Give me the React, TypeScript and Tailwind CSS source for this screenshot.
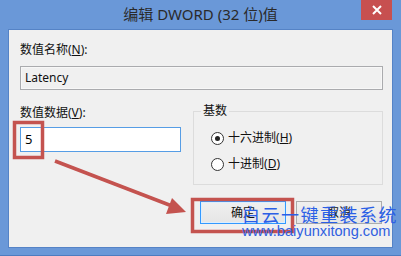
import React from "react";

const font = "font-['Noto_Sans','Noto_Sans_CJK_SC',sans-serif]";

function Radio({ checked, label, accel }: { checked: boolean; label: string; accel: string }) {
  return (
    <div className="flex items-center h-[16px]">
      <div className="w-[13px] h-[13px] rounded-full border border-[#333] bg-white flex items-center justify-center">
        {checked && <div className="w-[5px] h-[5px] rounded-full bg-[#222]" />}
      </div>
      <span className="ml-[4px] text-[12px] leading-[16px] text-[#111]">
        {label}(<u>{accel}</u>)
      </span>
    </div>
  );
}

export default function App() {
  return (
    <div className={`relative w-[401px] h-[256px] bg-[#6a98d8] flex flex-col border-b border-[#4d7cc0] ${font}`}>
      {/* title bar */}
      <div className="h-[29px] flex items-start shrink-0">
        <div className="w-[40px]" />
        <div className="flex-1 text-center text-[15px] leading-[28px] text-[#2a2a2a]">编辑 DWORD (32 位)值</div>
        <div className="w-[31px] h-[20px] mr-[9px] bg-[#c75050] flex items-center justify-center">
          <svg width="10" height="10" viewBox="0 0 10 10">
            <path d="M1 1 L9 9 M9 1 L1 9" stroke="#fff" strokeWidth="2" />
          </svg>
        </div>
      </div>
      {/* client area */}
      <div className="mx-[8px] h-[219px] bg-[#f0f0f0] border border-[#5583c6] pl-[11px] pr-[8px] pt-[12px] text-[#111]">
        <div className="text-[12px] leading-[16px]">
          数值名称(<u>N</u>):
        </div>
        <div className="mt-[8px] mr-[1px] h-[24px] border border-[#aaabae] bg-[#f0f0f0] pl-[4px] text-[12px] leading-[22px] shadow-[inset_0_0_0_1px_#f7f7f7]">
          Latency
        </div>
        <div className="mt-[13px] flex gap-[12px]">
          <div className="w-[161px] pt-[2px]">
            <div className="text-[12px] leading-[16px]">
              数值数据(<u>V</u>):
            </div>
            <div className="mt-[6px] h-[25px] border border-[#569de5] bg-white pl-[4px] text-[13px] leading-[23px] text-black">
              5
            </div>
          </div>
          <fieldset className="w-[190px] h-[82px] border border-[#dcdcdc] px-[7px] pt-[11px] pl-[17px] m-0">
            <legend className="ml-[-10px] px-[2px] text-[12px] leading-[16px]">基数</legend>
            <Radio checked label="十六进制" accel="H" />
            <div className="mt-[10px]">
              <Radio checked={false} label="十进制" accel="D" />
            </div>
          </fieldset>
        </div>
        <div className="mt-[16px] flex justify-end gap-[10px] mr-[2px]">
          <div className="w-[86px] h-[23px] border border-[#3399ff] bg-gradient-to-b from-[#f0f0f0] to-[#e5e5e5] flex items-center justify-center text-[12px] shadow-[inset_0_0_0_1px_#dbeeff]">
            确定
          </div>
          <div className="w-[86px] h-[23px] border border-[#acacac] bg-gradient-to-b from-[#f0f0f0] to-[#e5e5e5] flex items-center justify-center text-[12px]">
            取消
          </div>
        </div>
      </div>

      {/* annotations overlay */}
      <svg className="absolute inset-0 pointer-events-none" width="401" height="256" viewBox="0 0 401 256">
        <defs>
          <filter id="soft" x="-10%" y="-10%" width="120%" height="120%">
            <feGaussianBlur stdDeviation="0.5" />
          </filter>
        </defs>
        <g filter="url(#soft)" fill="none" stroke="#c4524f" strokeWidth="3.5">
          <rect x="14.5" y="122.5" width="28" height="35" />
          <rect x="192.5" y="199.5" width="100" height="32" />
          <line x1="55" y1="161" x2="172" y2="206" />
        </g>
        <polygon filter="url(#soft)" points="172,198 166,214 186,212" fill="#c4524f" />
      </svg>

      {/* watermark overlay */}
      <div className="absolute left-[242px] top-[203px] text-[18px] leading-[22px] tracking-[1.5px] text-[#2b5fe6] font-['Noto_Sans_CJK_SC',sans-serif]">
        白云一键重装系统
      </div>
      <div className="absolute left-[242px] top-[223px] text-[14.6px] leading-[16px] text-[#3060e0] font-['Liberation_Sans',sans-serif]">
        www.baiyunxitong.com
      </div>
    </div>
  );
}
